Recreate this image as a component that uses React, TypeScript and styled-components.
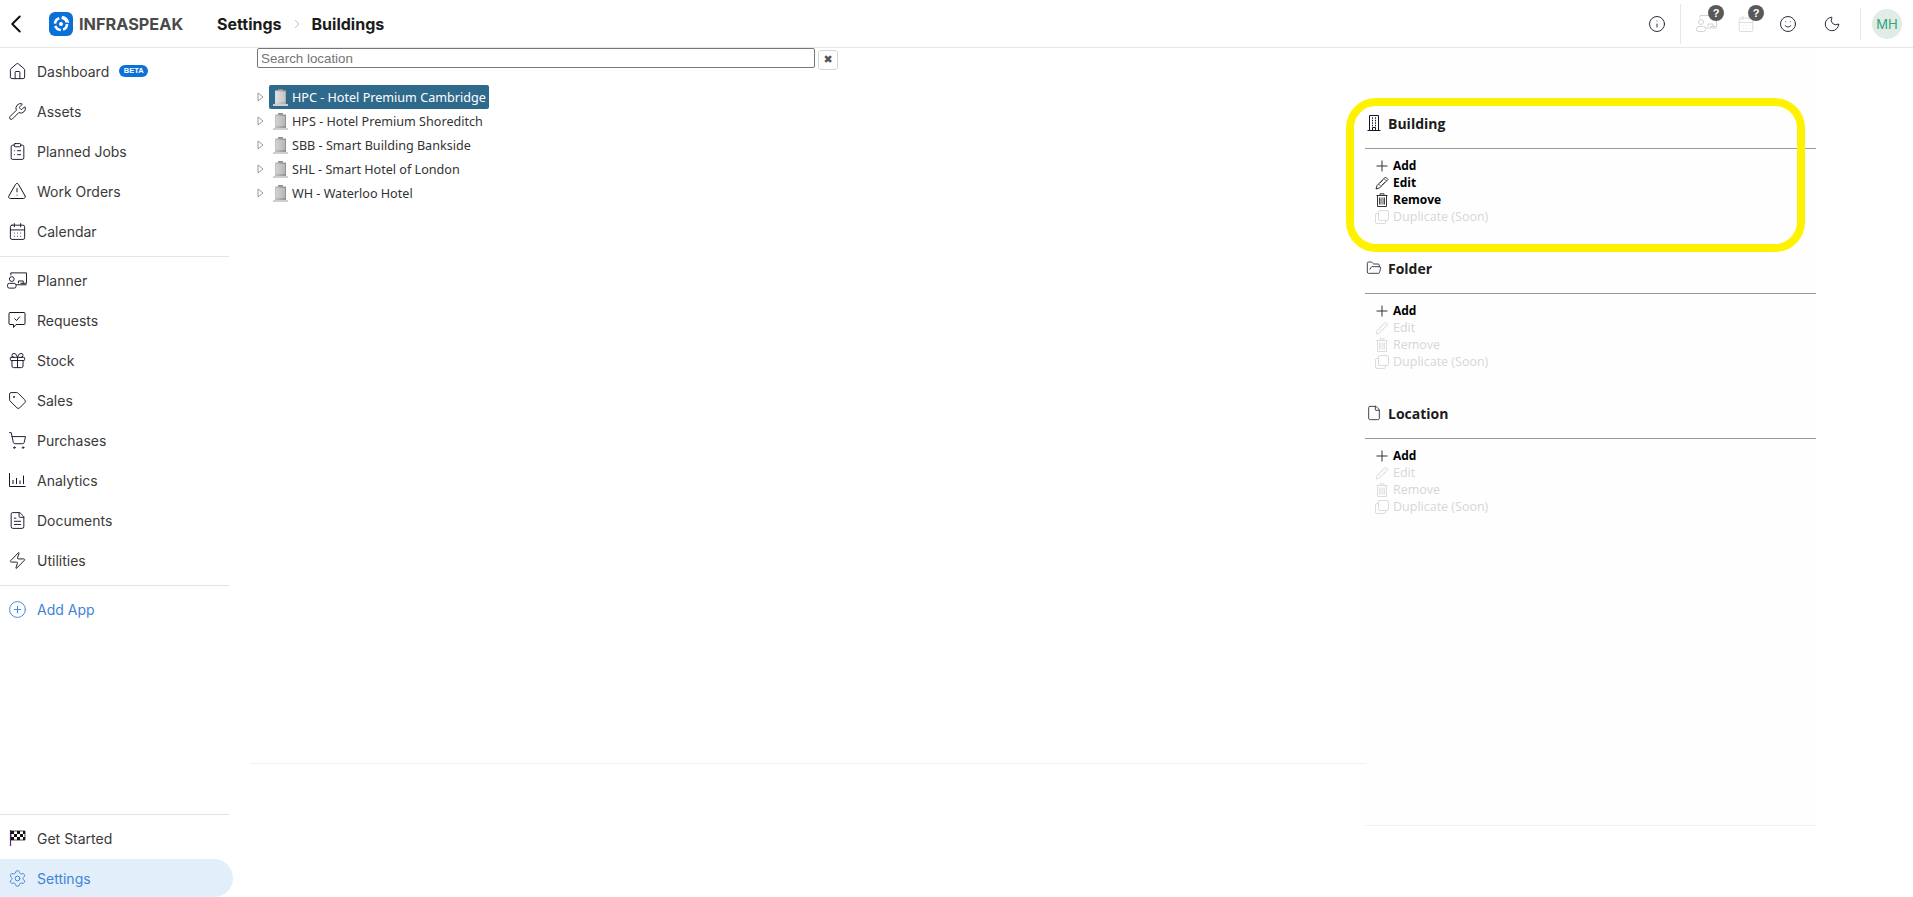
import React from 'react';
import styled, { createGlobalStyle } from 'styled-components';
import {
  House, Wrench, ClipboardList, TriangleAlert, CalendarDays, Gift, Tag, ShoppingCart, FileText, Zap,
  CirclePlus, Settings, Info, Smile, Moon, FolderOpen, File, ChevronLeft,
} from 'lucide-react';

const GlobalStyle = createGlobalStyle`
  html, body { margin: 0; padding: 0; background: #fff; overflow: hidden; }
  body { font-family: "Inter", "Liberation Sans", sans-serif; }
  * { box-sizing: border-box; }
`;

const Page = styled.div`
  width: 1913px;
  height: 897px;
  display: flex;
  flex-direction: column;
`;

const Header = styled.header`
  height: 48px;
  flex: none;
  display: flex;
  align-items: center;
  border-bottom: 1px solid #e6e6e6;
`;

const BackButton = styled.div`
  width: 32px;
  padding-left: 1px;
  display: flex;
  color: #111;
`;

const Brand = styled.div`
  margin-left: 17px;
  display: flex;
  align-items: center;
  gap: 6px;
  width: 168px;
  font-family: "Inter", sans-serif;
  font-weight: 700;
  font-size: 16.3px;
  color: #4a4a4a;
`;

const Crumbs = styled.div`
  display: flex;
  align-items: center;
  font-family: "Inter", sans-serif;
  font-weight: 700;
  font-size: 16px;
  color: #1b1b1b;
`;

const CrumbArrow = styled.span`
  display: flex;
  margin: 0 11px 0 12px;
  color: #c4c4c4;
`;

const HeaderTools = styled.div`
  margin-left: auto;
  display: flex;
  align-items: center;
  height: 100%;
`;

const ToolSlot = styled.div<{ $w: number }>`
  position: relative;
  width: ${p => p.$w}px;
  display: flex;
  justify-content: center;
  align-items: center;
  color: #16162a;
`;

const ToolDivider = styled.div<{ $h: number; $left?: number; $right?: number }>`
  width: 1px;
  height: ${p => p.$h}px;
  margin: 0 ${p => p.$right ?? 0}px 0 ${p => p.$left ?? 0}px;
  background: #e6e6e6;
`;

const QuestionBadge = styled.span`
  position: absolute;
  top: -10px;
  right: 2px;
  width: 16px;
  height: 16px;
  border-radius: 50%;
  background: #595959;
  color: #fff;
  font: 700 11px/16px "Liberation Sans", sans-serif;
  text-align: center;
`;

const Avatar = styled.div`
  width: 30px;
  height: 30px;
  margin: 0 11px;
  border-radius: 50%;
  background: #e0ece4;
  color: #2ea583;
  font-size: 13px;
  line-height: 30px;
  text-align: center;
`;

const Body = styled.div`
  flex: 1;
  display: flex;
  min-height: 0;
`;

const Sidebar = styled.nav`
  width: 233px;
  flex: none;
  display: flex;
  flex-direction: column;
  padding-top: 3px;
`;

const NavItem = styled.div<{ $active?: boolean; $accent?: boolean }>`
  height: ${p => (p.$active ? 38 : 40)}px;
  margin-top: ${p => (p.$active ? 1 : 0)}px;
  flex: none;
  display: flex;
  align-items: center;
  gap: 10px;
  padding-left: 7px;
  font-size: 14px;
  color: ${p => (p.$active || p.$accent ? '#3d83d9' : '#3a3a3a')};
  background: ${p => (p.$active ? '#e2effa' : 'transparent')};
  border-radius: ${p => (p.$active ? '0 20px 20px 0' : '0')};
`;

const NavIcon = styled.span<{ $tinted?: boolean }>`
  width: 20px;
  height: 20px;
  flex: none;
  display: flex;
  align-items: center;
  justify-content: center;
  color: ${p => (p.$tinted ? 'inherit' : '#16162a')};
`;

const NavDivider = styled.div`
  width: 229px;
  height: 1px;
  flex: none;
  background: #e4e4e4;
  margin: 5px 0 3px;
`;

const BetaBadge = styled.span`
  width: 29px;
  height: 12px;
  border-radius: 6px;
  background: #0a72d6;
  color: #fff;
  font: 700 7.5px/12px "Liberation Sans", sans-serif;
  text-align: center;
`;

const SidebarBottom = styled.div`
  margin-top: auto;
  display: flex;
  flex-direction: column;
`;

const Main = styled.main`
  flex: 1;
  display: flex;
  min-width: 0;
`;

const LeftPane = styled.section`
  width: 1115px;
  height: 716px;
  margin-left: 17px;
  padding-left: 7px;
  border-bottom: 1px solid #f0f0f0;
`;

const SearchRow = styled.div`
  display: flex;
  align-items: flex-start;
  gap: 3px;
`;

const SearchInput = styled.input`
  width: 558px;
  height: 20px;
  padding: 0 3px;
  border: 1px solid #767676;
  border-radius: 2px;
  font: 400 13.33px "Liberation Sans", sans-serif;
  &::placeholder { color: #757575; }
`;

const ClearButton = styled.div`
  width: 20px;
  height: 20px;
  margin-top: 2px;
  border: 1px solid #d6d6d6;
  border-radius: 3px;
  color: #555;
  font: 700 11px/18px "DejaVu Sans", sans-serif;
  text-align: center;
`;

const Tree = styled.ul`
  list-style: none;
  margin: 15px 0 0;
  padding: 0;
`;

const TreeRow = styled.li`
  height: 24px;
  display: flex;
  align-items: center;
`;

const Expander = styled.span`
  width: 12px;
  display: flex;
  color: #999;
`;

const TreeLabel = styled.span<{ $selected?: boolean }>`
  height: 24px;
  display: flex;
  align-items: center;
  gap: 4px;
  padding: 0 3px 0 4px;
  border-radius: 2px;
  font-family: "Noto Sans", sans-serif;
  font-size: 12.6px;
  color: ${p => (p.$selected ? '#fff' : '#333')};
  background: ${p => (p.$selected ? '#2f6a8c' : 'transparent')};
`;

const RightPane = styled.aside`
  position: relative;
  width: 451px;
  height: 778px;
  padding-top: 64px;
  background: #fefefe;
  border-bottom: 1px solid #f0f0f0;
`;

const Highlight = styled.div`
  position: absolute;
  left: -19px;
  top: 50px;
  width: 459px;
  height: 154px;
  border: 8px solid #fff200;
  border-radius: 30px;
  pointer-events: none;
`;

const Section = styled.div`
  margin-bottom: 32px;
`;

const SectionTitle = styled.h3`
  margin: 0 0 14px;
  height: 22px;
  display: flex;
  align-items: center;
  gap: 6px;
  padding-left: 1px;
  font-family: "Open Sans", sans-serif;
  font-weight: 700;
  font-size: 14px;
  color: #1c1c1c;
`;

const TitleIcon = styled.span`
  width: 16px;
  height: 16px;
  flex: none;
  display: flex;
  justify-content: center;
  color: #16162a;
`;

const SectionLine = styled.div`
  height: 1px;
  background: #999;
  margin-bottom: 8px;
`;

const Action = styled.div<{ $off?: boolean }>`
  height: 17px;
  display: flex;
  align-items: center;
  gap: 4px;
  padding-left: 10px;
  font-family: "Open Sans", sans-serif;
  font-size: ${p => (p.$off ? 12.5 : 12)}px;
  font-weight: ${p => (p.$off ? 400 : 700)};
  color: ${p => (p.$off ? '#d6d6d6' : '#000')};
`;

const ActionIcon = styled.span<{ $off?: boolean }>`
  width: 14px;
  height: 15px;
  flex: none;
  display: flex;
  align-items: center;
  justify-content: center;
  color: ${p => (p.$off ? '#dcdcdc' : '#333')};
`;

const Logo = () => (
  <svg width="24" height="24" viewBox="0 0 24 24">
    <rect width="24" height="24" rx="6" fill="#0a6fd6" />
    <circle cx="12" cy="12" r="6" fill="none" stroke="#fff" strokeWidth="2.6" strokeDasharray="7 2.4" />
    <path d="M13 4.500a7.500 7.500 0 0 1 6.500 6.500" fill="none" stroke="#fff" strokeWidth="1.300" />
    <circle cx="12" cy="12" r="2" fill="#fff" />
  </svg>
);

const PlannerIcon = ({ color = 'currentColor' }: { color?: string }) => (
  <svg width="21" height="17" viewBox="0 0 21 17" fill="none" stroke={color} strokeWidth="1">
    <path d="M4 3V.5h16.500v11H14" />
    <path d="M12 11.500V9h5v2.500" />
    <circle cx="5" cy="7" r="2.500" />
    <rect x=".5" y="11.500" width="9" height="5" rx="2" />
    <path d="M9.500 13h11" />
  </svg>
);

const RequestsIcon = () => (
  <svg width="18" height="18" viewBox="0 0 18 18" fill="none" stroke="currentColor" strokeWidth="1">
    <path d="M2 1.500h14a1 1 0 0 1 1 1v10a1 1 0 0 1-1 1H8l-2.500 3v-3H2a1 1 0 0 1-1-1v-10a1 1 0 0 1 1-1z" />
    <path d="M6.500 7.500l2 2 3.500-4" />
  </svg>
);

const AnalyticsIcon = () => (
  <svg width="17" height="14" viewBox="0 0 17 14" fill="none" stroke="currentColor" strokeWidth="1">
    <path d="M.5 0v13.500H16.500" />
    <path d="M4 11V7M7.500 11V5M11 11V7.500M14.500 11V2.500" />
  </svg>
);

const FlagIcon = () => (
  <svg width="17" height="16" viewBox="0 0 17 16">
    <path d="M1.500 0v16" stroke="#5a2a78" strokeWidth="1.200" />
    <path d="M2 1h14v9H2z" fill="#fff" stroke="#222" strokeWidth=".8" />
    <path d="M2 1h3v3H2zM8 1h3v3H8zM14 1h2v3h-2zM5 4h3v3H5zM11 4h3v3h-3zM2 7h3v3H2zM8 7h3v3H8zM14 7h2v3h-2z" fill="#111" />
  </svg>
);

const TreeBuilding = ({ selected }: { selected?: boolean }) => (
  <svg width="15" height="17" viewBox="0 0 15 17">
    <defs>
      <linearGradient id={selected ? 'bldS' : 'bld'} x1="0" x2="1" y1="0" y2="0">
        <stop offset="0" stopColor={selected ? '#dcdcdc' : '#c4c4c4'} />
        <stop offset="1" stopColor={selected ? '#a8a8a8' : '#8e8e8e'} />
      </linearGradient>
    </defs>
    <rect x="5" y="0" width="5" height="2" fill="#8f8f8f" />
    <rect x="2" y="1.500" width="11" height="14" fill={`url(#${selected ? 'bldS' : 'bld'})`} />
    <path d="M3 4h9M3 6h9M3 8h9M3 10h9M3 12h9" stroke="#eee" strokeWidth=".8" />
    <rect x="0" y="15" width="15" height="2" fill="#cfcfcf" />
  </svg>
);

const Triangle = () => (
  <svg width="7" height="10" viewBox="0 0 7 10" fill="none" stroke="currentColor">
    <path d="M1 1l5 4-5 4z" />
  </svg>
);

const BuildingIcon = () => (
  <svg width="14" height="16" viewBox="0 0 14 16" fill="none" stroke="currentColor" strokeWidth="1">
    <path d="M2.500 15.500V.5h9v15M.5 15.500h13M5.500 15.500v-3h3v3" />
    <path d="M5 3h1M8 3h1M5 5.500h1M8 5.500h1M5 8h1M8 8h1M5 10.500h1M8 10.500h1" strokeWidth="1.300" />
  </svg>
);

const PlusIcon = () => (
  <svg width="12" height="12" viewBox="0 0 12 12" stroke="currentColor" strokeWidth="1">
    <path d="M6 .5v11M.5 6h11" />
  </svg>
);

const PencilIcon = () => (
  <svg width="14" height="14" viewBox="0 0 14 14" fill="none" stroke="currentColor" strokeWidth="1">
    <path d="M10.500 1l2.500 2.500-8.500 8.500L1 13l1-3.500z" />
    <path d="M9 2.500L11.500 5M3.500 8l2.500 2.500M5 7l3-3M7 9l3-3" strokeWidth=".8" />
  </svg>
);

const TrashIcon = () => (
  <svg width="12" height="14" viewBox="0 0 12 14" fill="none" stroke="currentColor" strokeWidth="1">
    <path d="M.5 2.500h11M4 2.500V.8h4v1.700" />
    <path d="M1.500 2.500v11h9v-11" />
    <path d="M3.500 4.500v7M5 4.500v7M7 4.500v7M8.500 4.500v7" strokeWidth=".9" />
  </svg>
);

const CopyIcon = () => (
  <svg width="14" height="14" viewBox="0 0 14 14" fill="none" stroke="currentColor" strokeWidth="1">
    <rect x="3.500" y=".5" width="10" height="10" rx="1.500" />
    <path d="M3.500 3.500H2A1.500 1.500 0 0 0 .5 5v7A1.500 1.500 0 0 0 2 13.500h7a1.500 1.500 0 0 0 1.500-1.500v-1.500" />
  </svg>
);

const ic = { size: 19, strokeWidth: 1.2 };

const topNav = [
  { label: 'Dashboard', icon: <House {...ic} />, beta: true },
  { label: 'Assets', icon: <Wrench {...ic} /> },
  { label: 'Planned Jobs', icon: <ClipboardList {...ic} /> },
  { label: 'Work Orders', icon: <TriangleAlert size={20} strokeWidth={1.2} /> },
  { label: 'Calendar', icon: <CalendarDays {...ic} /> },
];

const midNav = [
  { label: 'Planner', icon: <PlannerIcon /> },
  { label: 'Requests', icon: <RequestsIcon /> },
  { label: 'Stock', icon: <Gift {...ic} /> },
  { label: 'Sales', icon: <Tag {...ic} /> },
  { label: 'Purchases', icon: <ShoppingCart {...ic} /> },
  { label: 'Analytics', icon: <AnalyticsIcon /> },
  { label: 'Documents', icon: <FileText {...ic} /> },
  { label: 'Utilities', icon: <Zap {...ic} /> },
];

const locations = [
  'HPC - Hotel Premium Cambridge',
  'HPS - Hotel Premium Shoreditch',
  'SBB - Smart Building Bankside',
  'SHL - Smart Hotel of London',
  'WH - Waterloo Hotel',
];

const sections = [
  { title: 'Building', icon: <BuildingIcon />, enabled: ['Add', 'Edit', 'Remove'] },
  { title: 'Folder', icon: <FolderOpen size={16} strokeWidth={1.2} />, enabled: ['Add'] },
  { title: 'Location', icon: <File size={16} strokeWidth={1.2} />, enabled: ['Add'] },
];

const actions = [
  { label: 'Add', icon: <PlusIcon /> },
  { label: 'Edit', icon: <PencilIcon /> },
  { label: 'Remove', icon: <TrashIcon /> },
  { label: 'Duplicate (Soon)', icon: <CopyIcon /> },
];

export default function App() {
  return (
    <Page>
      <GlobalStyle />
      <Header>
        <BackButton><ChevronLeft size={30} strokeWidth={1.6} /></BackButton>
        <Brand><Logo />INFRASPEAK</Brand>
        <Crumbs>
          Settings
          <CrumbArrow>
            <svg width="7" height="10" viewBox="0 0 7 10" fill="none" stroke="currentColor"><path d="M1 1l4 4-4 4" /></svg>
          </CrumbArrow>
          Buildings
        </Crumbs>
        <HeaderTools>
          <ToolSlot $w={46}><Info size={18} strokeWidth={1.2} /></ToolSlot>
          <ToolDivider $h={40} $right={5} />
          <ToolSlot $w={40}>
            <PlannerIcon color="#d2d2d2" />
            <QuestionBadge>?</QuestionBadge>
          </ToolSlot>
          <ToolSlot $w={40}>
            <CalendarDays size={18} strokeWidth={1} color="#d2d2d2" />
            <QuestionBadge>?</QuestionBadge>
          </ToolSlot>
          <ToolSlot $w={44}><Smile size={18} strokeWidth={1.2} /></ToolSlot>
          <ToolSlot $w={44}><Moon size={18} strokeWidth={1.2} /></ToolSlot>
          <ToolDivider $h={32} $left={6} />
          <Avatar>MH</Avatar>
        </HeaderTools>
      </Header>
      <Body>
        <Sidebar>
          {topNav.map(item => (
            <NavItem key={item.label}>
              <NavIcon>{item.icon}</NavIcon>
              {item.label}
              {item.beta && <BetaBadge>BETA</BetaBadge>}
            </NavItem>
          ))}
          <NavDivider />
          {midNav.map(item => (
            <NavItem key={item.label}>
              <NavIcon>{item.icon}</NavIcon>
              {item.label}
            </NavItem>
          ))}
          <NavDivider />
          <NavItem $accent>
            <NavIcon $tinted><CirclePlus {...ic} /></NavIcon>
            Add App
          </NavItem>
          <SidebarBottom>
            <NavDivider />
            <NavItem>
              <NavIcon><FlagIcon /></NavIcon>
              Get Started
            </NavItem>
            <NavItem $active>
              <NavIcon $tinted><Settings {...ic} /></NavIcon>
              Settings
            </NavItem>
          </SidebarBottom>
        </Sidebar>
        <Main>
          <LeftPane>
            <SearchRow>
              <SearchInput placeholder="Search location" />
              <ClearButton>✖</ClearButton>
            </SearchRow>
            <Tree>
              {locations.map((name, i) => (
                <TreeRow key={name}>
                  <Expander><Triangle /></Expander>
                  <TreeLabel $selected={i === 0}>
                    <TreeBuilding selected={i === 0} />
                    {name}
                  </TreeLabel>
                </TreeRow>
              ))}
            </Tree>
          </LeftPane>
          <RightPane>
            {sections.map(section => (
              <Section key={section.title}>
                <SectionTitle><TitleIcon>{section.icon}</TitleIcon>{section.title}</SectionTitle>
                <SectionLine />
                {actions.map(action => {
                  const off = !section.enabled.includes(action.label);
                  return (
                    <Action key={action.label} $off={off}>
                      <ActionIcon $off={off}>{action.icon}</ActionIcon>
                      {action.label}
                    </Action>
                  );
                })}
              </Section>
            ))}
            <Highlight />
          </RightPane>
        </Main>
      </Body>
    </Page>
  );
}
